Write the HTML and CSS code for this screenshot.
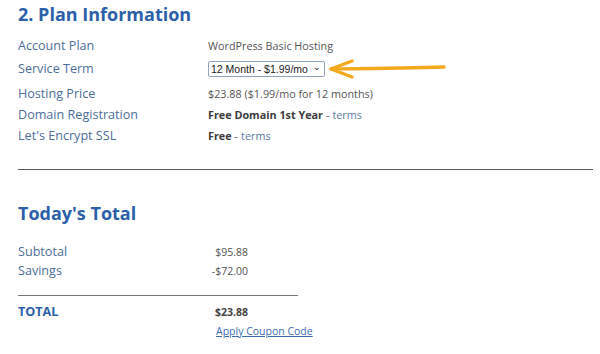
FILE: index.html
```html
<!DOCTYPE html>
<html lang="en">
<head>
    <meta charset="UTF-8">
    <meta name="viewport" content="width=device-width, initial-scale=1.0">
    <title>Plan Information</title>
    <link rel="stylesheet" href="styles.css">
</head>
<body>
    <div class="plan">
        <h2 class="section-title">2. Plan Information</h2>
        <div class="info-grid">
            <div class="label">Account Plan</div>
            <div class="value">WordPress Basic Hosting</div>

            <div class="label row-select">Service Term</div>
            <div class="value row-select">
                <span class="term-select">12 Month - $1.99/mo <span class="caret">&#8964;</span></span>
                <svg class="arrow" width="120" height="22" viewBox="0 0 120 22">
                    <path d="M3 11 C 40 10.5, 80 10, 116 9" stroke="#f2aa1c" stroke-width="3.4" fill="none" stroke-linecap="round"/>
                    <path d="M24 3 L 3 11 L 24 19" stroke="#f2aa1c" stroke-width="3.4" fill="none" stroke-linecap="round" stroke-linejoin="round"/>
                </svg>
            </div>

            <div class="label">Hosting Price</div>
            <div class="value">$23.88 ($1.99/mo for 12 months)</div>

            <div class="label">Domain Registration</div>
            <div class="value"><b>Free Domain 1st Year</b> - <a href="#">terms</a></div>

            <div class="label">Let's Encrypt SSL</div>
            <div class="value"><b>Free</b> - <a href="#">terms</a></div>
        </div>
    </div>

    <hr class="divider">

    <div class="totals">
        <h2 class="section-title small">Today's Total</h2>
        <div class="sum-row">
            <div class="label">Subtotal</div>
            <div class="amount">$95.88</div>
        </div>
        <div class="sum-row">
            <div class="label">Savings</div>
            <div class="amount">-$72.00</div>
        </div>
        <hr class="divider short">
        <div class="sum-row">
            <div class="label total">TOTAL</div>
            <div class="amount bold">$23.88</div>
        </div>
        <div class="coupon"><a href="#">Apply Coupon Code</a></div>
    </div>
</body>
</html>
```

FILE: styles.css
```css
body {
    margin: 0;
    padding: 0 7px 0 18px;
    background: #fff;
    font-family: "Open Sans", "Liberation Sans", sans-serif;
    color: #555;
}

.section-title {
    margin: 0;
    font-size: 18px;
    font-weight: 700;
    color: #2c5fa9;
    line-height: 28px;
}

.section-title.small {
    font-size: 18px;
    line-height: 26px;
}

.info-grid {
    display: grid;
    grid-template-columns: 190px 1fr;
    margin-top: 7px;
}

.label {
    font-size: 12.6px;
    color: #4d6e99;
    line-height: 21px;
}

.value {
    font-size: 10.8px;
    line-height: 21px;
    color: #555;
    display: flex;
    align-items: center;
}

.value b {
    color: #3c3c3c;
    margin-right: 3px;
}

.value a {
    color: #5b7aa5;
    text-decoration: none;
    margin-left: 3px;
}

.row-select {
    padding: 2px 0 3px;
}

.term-select {
    display: inline-flex;
    align-items: center;
    justify-content: space-between;
    width: 110px;
    height: 14px;
    padding: 0 3px 0 2px;
    border: 1px solid #8fa3bc;
    border-radius: 2px;
    font-family: "Liberation Sans", Arial, sans-serif;
    font-size: 10.5px;
    color: #222;
    line-height: 14px;
}

.caret {
    font-size: 9px;
    line-height: 6px;
    margin-top: -4px;
}

.arrow {
    margin-left: 3px;
}

.divider {
    border: 0;
    border-top: 1.5px solid #5a5a5a;
    margin: 23px 0 0;
}

.totals {
    padding-top: 30px;
}

.totals .section-title {
    margin-bottom: 16px;
}

.sum-row {
    display: flex;
    align-items: center;
    height: 19px;
}

.sum-row .label {
    width: 190px;
}

.amount {
    width: 40px;
    text-align: right;
    font-size: 10.5px;
    color: #555;
}

.amount.bold {
    font-weight: 700;
    color: #444;
}

.label.total {
    font-weight: 700;
    color: #2c5fa9;
}

.divider.short {
    width: 280px;
    margin: 15px 0 6px;
    border-top-width: 1px;
    border-top-color: #777;
}

.coupon {
    margin: 3px 0 0 198px;
    font-size: 10.5px;
}

.coupon a {
    color: #3d6bb3;
}
```
